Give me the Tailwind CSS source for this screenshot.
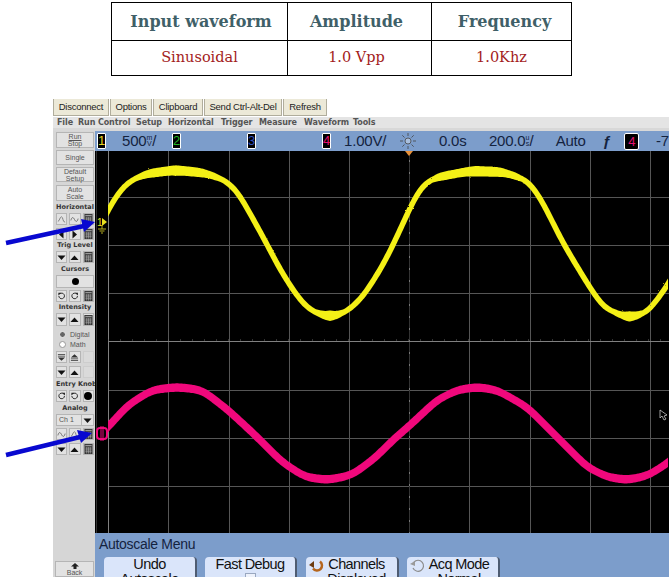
<!DOCTYPE html>
<html lang="en">
<head>
    <meta charset="UTF-8">
    <title>Oscilloscope capture</title>
    <script src="https://cdn.jsdelivr.net/npm/@tailwindcss/browser@4"></script>
</head>
<body class="bg-white w-[670px] h-[580px] overflow-hidden relative">

    <!-- icons used by the scope buttons -->
    <svg width="0" height="0" class="absolute">
        <symbol id="calc" viewBox="0 0 9 11"><rect width="9" height="11" fill="#333"/><path d="M1 1h7v1.5H1z" fill="#999"/><path d="M1 4.5h7M1 6.5h7M1 8.5h7M2.5 3.5v7M4.5 3.5v7M6.5 3.5v7" stroke="#aaa" stroke-width=".7"/></symbol>
        <symbol id="down" viewBox="0 0 9 9"><path d="M.5 2.500h8L4.500 7z" fill="#111"/></symbol>
        <symbol id="up" viewBox="0 0 9 9"><path d="M.5 7h8L4.500 2.500z" fill="#111"/></symbol>
        <symbol id="left" viewBox="0 0 9 9"><path d="M6.500 .5v8L2 4.500z" fill="#111"/></symbol>
        <symbol id="right" viewBox="0 0 9 9"><path d="M2.500 .5v8L7 4.500z" fill="#111"/></symbol>
        <symbol id="cw" viewBox="0 0 10 10"><path d="M8 5a3 3 0 1 1-1-2.300" fill="none" stroke="#222" stroke-width="1"/><path d="M5.500 1.500h3v3z" fill="#222"/></symbol>
        <symbol id="ccw" viewBox="0 0 10 10"><path d="M2 5a3 3 0 1 0 1-2.300" fill="none" stroke="#222" stroke-width="1"/><path d="M4.500 1.500h-3v3z" fill="#222"/></symbol>
        <symbol id="wave" viewBox="0 0 10 10"><path d="M1 6c1-4 2.500-4 4-1s3 3 4-1" fill="none" stroke="#666" stroke-width="1"/></symbol>
        <symbol id="step" viewBox="0 0 10 10"><path d="M1 7c2 0 2-5 4-5s1 6 4 6" fill="none" stroke="#777" stroke-width="1"/></symbol>
        <symbol id="eject" viewBox="0 0 10 10"><path d="M1 5h8L5 1.500zM1 6h8v1H1zM1 8h8v1H1z" fill="#333"/></symbol>
        <symbol id="ejectdown" viewBox="0 0 10 10"><path d="M1 1h8v1H1zM1 3h8v1H1zM1 5h8L5 8.500z" fill="#333"/></symbol>
    </svg>

    <!-- settings table -->
    <div class="pt-[2px] pl-[111px]">
        <table class="border-collapse border border-black w-[461px] h-[74px] table-fixed font-['DejaVu_Serif',serif] text-center">
            <tr class="h-[38px] text-[#3f6068] text-[16px] font-bold">
                <th class="border border-black w-[176px] pl-[3px] font-bold">Input waveform</th>
                <th class="border border-black w-[144px] pr-[6px] font-bold">Amplitude</th>
                <th class="border border-black pl-[6px] font-bold">Frequency</th>
            </tr>
            <tr class="text-[#a31c1c] text-[14.5px]">
                <td class="border border-black">Sinusoidal</td>
                <td class="border border-black pr-[6px]">1.0 Vpp</td>
                <td class="border border-black">1.0Khz</td>
            </tr>
        </table>
    </div>

    <!-- scope window -->
    <div class="mt-[23px] ml-[53px] w-[616px] h-[478px] overflow-hidden font-['Liberation_Sans',sans-serif]">
        <div class="flex h-[17px] text-[9.5px] tracking-[-0.25px] text-[#222] leading-[16px] text-center">
            <div class="w-[56px] mr-[1px] bg-[#ece9d8] border-x border-b border-[#b0ad9c]">Disconnect</div>
            <div class="w-[42px] mr-[1px] bg-[#ece9d8] border-x border-b border-[#b0ad9c]">Options</div>
            <div class="w-[50px] mr-[1px] bg-[#ece9d8] border-x border-b border-[#b0ad9c]">Clipboard</div>
            <div class="w-[78px] mr-[1px] bg-[#ece9d8] border-x border-b border-[#b0ad9c]">Send Ctrl-Alt-Del</div>
            <div class="w-[44px] bg-[#ece9d8] border-x border-b border-[#b0ad9c]">Refresh</div>
        </div>
        <div class="flex mt-[1px] h-[11px] pl-[4px] bg-[#e4e4e4] text-[8px] font-bold text-[#555] leading-[11px] font-['DejaVu_Sans',sans-serif] tracking-[-0.1px] whitespace-nowrap">
            <span class="w-[21px]">File</span><span class="w-[58px]">Run Control</span><span class="w-[32px]">Setup</span><span class="w-[53px]">Horizontal</span><span class="w-[38px]">Trigger</span><span class="w-[45px]">Measure</span><span class="w-[49px]">Waveform</span><span>Tools</span>
        </div>
        <div class="h-[3px] bg-[#d8d8d8]"></div>

        <div class="flex h-[446px]">
            <!-- left button column -->
            <div class="w-[42px] shrink-0 bg-[#d6d6d6] flex flex-col pl-[3px] pr-[1px] pt-[1px] text-[7px] text-[#555] leading-[7px] text-center">
                <div class="h-[16px] mb-[2px] bg-[#e2e2e2] border border-[#b5b5b5] flex items-center justify-center"><span><span class="underline">Run</span><br>Stop</span></div>
                <div class="h-[15px] mb-[2px] bg-[#e2e2e2] border border-[#b5b5b5] flex items-center justify-center">Single</div>
                <div class="h-[15px] mb-[3px] bg-[#e2e2e2] border border-[#b5b5b5] flex items-center justify-center"><span>Default<br>Setup</span></div>
                <div class="h-[16px] bg-[#e2e2e2] border border-[#b5b5b5] flex items-center justify-center"><span>Auto<br>Scale</span></div>

                <div class="h-[12px] leading-[12px] font-bold text-[6.5px] text-[#333] font-['DejaVu_Sans',sans-serif] whitespace-nowrap">Horizontal</div>
                <div class="grid grid-cols-3 gap-x-[2px] gap-y-[3px]">
                    <div class="h-[12px] bg-[#e2e2e2] border border-[#b5b5b5] flex items-center justify-center"><svg width="9" height="9"><use href="#step"/></svg></div>
                    <div class="h-[12px] bg-[#e2e2e2] border border-[#b5b5b5] flex items-center justify-center"><svg width="9" height="9"><use href="#wave"/></svg></div>
                    <div class="h-[12px] bg-[#e2e2e2] border border-[#b5b5b5] flex items-center justify-center"><svg width="9" height="10"><use href="#calc"/></svg></div>
                    <div class="h-[12px] bg-[#e2e2e2] border border-[#b5b5b5] flex items-center justify-center"><svg width="9" height="9"><use href="#left"/></svg></div>
                    <div class="h-[12px] bg-[#e2e2e2] border border-[#b5b5b5] flex items-center justify-center"><svg width="9" height="9"><use href="#right"/></svg></div>
                    <div class="h-[12px] bg-[#e2e2e2] border border-[#b5b5b5] flex items-center justify-center"><svg width="9" height="10"><use href="#calc"/></svg></div>
                </div>

                <div class="h-[11px] leading-[11px] font-bold text-[6.5px] text-[#333] font-['DejaVu_Sans',sans-serif] whitespace-nowrap">Trig Level</div>
                <div class="grid grid-cols-3 gap-x-[2px]">
                    <div class="h-[12px] bg-[#e2e2e2] border border-[#b5b5b5] flex items-center justify-center"><svg width="9" height="9"><use href="#down"/></svg></div>
                    <div class="h-[12px] bg-[#e2e2e2] border border-[#b5b5b5] flex items-center justify-center"><svg width="9" height="9"><use href="#up"/></svg></div>
                    <div class="h-[12px] bg-[#e2e2e2] border border-[#b5b5b5] flex items-center justify-center"><svg width="9" height="10"><use href="#calc"/></svg></div>
                </div>

                <div class="h-[12px] leading-[12px] font-bold text-[6.5px] text-[#333] font-['DejaVu_Sans',sans-serif] whitespace-nowrap">Cursors</div>
                <div class="h-[13px] mb-[2px] bg-[#e2e2e2] border border-[#b5b5b5] flex items-center justify-center"><div class="w-[7px] h-[7px] rounded-full bg-black"></div></div>
                <div class="grid grid-cols-3 gap-x-[2px]">
                    <div class="h-[12px] bg-[#e2e2e2] border border-[#b5b5b5] flex items-center justify-center"><svg width="10" height="10"><use href="#ccw"/></svg></div>
                    <div class="h-[12px] bg-[#e2e2e2] border border-[#b5b5b5] flex items-center justify-center"><svg width="10" height="10"><use href="#cw"/></svg></div>
                    <div class="h-[12px] bg-[#e2e2e2] border border-[#b5b5b5] flex items-center justify-center"><svg width="9" height="10"><use href="#calc"/></svg></div>
                </div>

                <div class="h-[11px] leading-[11px] font-bold text-[6.5px] text-[#333] font-['DejaVu_Sans',sans-serif] whitespace-nowrap">Intensity</div>
                <div class="grid grid-cols-3 gap-x-[2px]">
                    <div class="h-[13px] bg-[#e2e2e2] border border-[#b5b5b5] flex items-center justify-center"><svg width="9" height="9"><use href="#down"/></svg></div>
                    <div class="h-[13px] bg-[#e2e2e2] border border-[#b5b5b5] flex items-center justify-center"><svg width="9" height="9"><use href="#up"/></svg></div>
                    <div class="h-[13px] bg-[#e2e2e2] border border-[#b5b5b5] flex items-center justify-center"><svg width="9" height="10"><use href="#calc"/></svg></div>
                </div>

                <div class="h-[10px] mt-[3px] flex items-center gap-[4px] pl-[3px]"><div class="w-[7px] h-[7px] rounded-full bg-[#666] border border-[#eee]"></div>Digital</div>
                <div class="h-[10px] flex items-center gap-[4px] pl-[3px]"><div class="w-[7px] h-[7px] rounded-full bg-white border border-[#999]"></div>Math</div>
                <div class="grid grid-cols-3 gap-x-[2px] gap-y-[3px] mt-[2px]">
                    <div class="h-[12px] bg-[#e2e2e2] border border-[#b5b5b5] flex items-center justify-center"><svg width="9" height="9"><use href="#ejectdown"/></svg></div>
                    <div class="h-[12px] bg-[#e2e2e2] border border-[#b5b5b5] flex items-center justify-center"><svg width="9" height="9"><use href="#eject"/></svg></div>
                    <div class="h-[12px] bg-[#dadada] border border-[#cdcdcd]"></div>
                    <div class="h-[12px] bg-[#e2e2e2] border border-[#b5b5b5] flex items-center justify-center"><svg width="9" height="9"><use href="#down"/></svg></div>
                    <div class="h-[12px] bg-[#e2e2e2] border border-[#b5b5b5] flex items-center justify-center"><svg width="9" height="9"><use href="#up"/></svg></div>
                    <div class="h-[12px] bg-[#dadada] border border-[#cdcdcd]"></div>
                </div>

                <div class="h-[12px] leading-[12px] font-bold text-[6.5px] text-[#333] font-['DejaVu_Sans',sans-serif] whitespace-nowrap">Entry Knob</div>
                <div class="grid grid-cols-3 gap-x-[2px]">
                    <div class="h-[12px] bg-[#e2e2e2] border border-[#b5b5b5] flex items-center justify-center"><svg width="10" height="10"><use href="#cw"/></svg></div>
                    <div class="h-[12px] bg-[#e2e2e2] border border-[#b5b5b5] flex items-center justify-center"><svg width="10" height="10"><use href="#ccw"/></svg></div>
                    <div class="h-[12px] bg-[#e2e2e2] border border-[#b5b5b5] flex items-center justify-center"><div class="w-[8px] h-[8px] rounded-full bg-black"></div></div>
                </div>

                <div class="h-[12px] leading-[12px] font-bold text-[6.5px] text-[#333] font-['DejaVu_Sans',sans-serif] whitespace-nowrap">Analog</div>
                <div class="h-[12px] flex bg-[#e2e2e2] border border-[#b5b5b5]"><div class="flex-1 pl-[2px] text-left leading-[10px]">Ch 1</div><div class="w-[12px] border-l border-[#b5b5b5] flex items-center justify-center"><svg width="9" height="9"><use href="#down"/></svg></div></div>
                <div class="grid grid-cols-3 gap-x-[2px] gap-y-[3px] mt-[2px]">
                    <div class="h-[12px] bg-[#e2e2e2] border border-[#b5b5b5] flex items-center justify-center"><svg width="9" height="9"><use href="#wave"/></svg></div>
                    <div class="h-[12px] bg-[#e2e2e2] border border-[#b5b5b5] flex items-center justify-center"><svg width="9" height="9"><use href="#step"/></svg></div>
                    <div class="h-[12px] bg-[#e2e2e2] border border-[#b5b5b5] flex items-center justify-center"><svg width="9" height="10"><use href="#calc"/></svg></div>
                    <div class="h-[12px] bg-[#e2e2e2] border border-[#b5b5b5] flex items-center justify-center"><svg width="9" height="9"><use href="#down"/></svg></div>
                    <div class="h-[12px] bg-[#e2e2e2] border border-[#b5b5b5] flex items-center justify-center"><svg width="9" height="9"><use href="#up"/></svg></div>
                    <div class="h-[12px] bg-[#e2e2e2] border border-[#b5b5b5] flex items-center justify-center"><svg width="9" height="10"><use href="#calc"/></svg></div>
                </div>

                <div class="mt-auto -ml-[1px] h-[16px] bg-[#e2e2e2] border border-[#b5b5b5] flex flex-col items-center justify-end leading-[7px]">
                    <svg width="8" height="6" viewBox="0 0 8 6"><path d="M4 0l4 3.500H5.500V6h-3V3.500H0z" fill="#222"/></svg>
                    <span>Back</span>
                </div>
            </div>

            <!-- right: status bar, plot, softkeys -->
            <div class="flex-1 flex flex-col min-w-0">
                <div class="h-[20px] shrink-0 bg-[#7c9dcb] flex items-center text-[15px] tracking-[-0.2px] text-[#14233f] leading-[20px] whitespace-nowrap">
                    <div class="ml-[2px] w-[9px] h-[16px] bg-black border border-white rounded-[1px] text-[#e8d820] text-[13px] leading-[14px] text-center">1</div>
                    <div class="ml-[16px] w-[51px] flex items-center">500<span class="inline-flex flex-col text-[7px] leading-[6px] tracking-normal text-center"><span>m</span><span>V</span></span>/</div>
                    <div class="w-[9px] h-[16px] bg-black border border-white rounded-[1px] text-[#22b422] text-[13px] leading-[14px] text-center">2</div>
                    <div class="ml-[66px] w-[9px] h-[16px] bg-black border border-white rounded-[1px] text-[#3050c0] text-[13px] leading-[14px] text-center">3</div>
                    <div class="ml-[66px] w-[9px] h-[16px] bg-black border border-white rounded-[1px] text-[#e01070] text-[13px] leading-[14px] text-center">4</div>
                    <div class="ml-[13px] w-[57px]">1.00V/</div>
                    <svg width="16" height="16" viewBox="0 0 16 16" class="shrink-0"><circle cx="8" cy="8" r="3" fill="#a9bfdd" stroke="#444" stroke-width=".8"/><path d="M8 0v3M8 13v3M0 8h3M13 8h3M2.300 2.300l2.200 2.200M11.500 11.500l2.200 2.200M13.700 2.300l-2.200 2.200M4.500 11.500l-2.200 2.200" stroke="#444" stroke-width=".8"/></svg>
                    <div class="ml-[23px] w-[51px]">0.0s</div>
                    <div class="w-[68px] flex items-center">200.0<span class="inline-flex flex-col text-[7px] leading-[6px] tracking-normal text-center"><span>u</span><span>s</span></span>/</div>
                    <div class="w-[48px]">Auto</div>
                    <div class="w-[22px] font-bold">ƒ</div>
                    <div class="w-[15px] h-[17px] bg-black border border-white rounded-[2px] text-[#e01070] text-[13px] leading-[15px] text-center">4</div>
                    <div class="ml-[17px]">-7</div>
                </div>
                <div class="h-[382px] shrink-0 bg-black relative">
                    <svg width="574" height="382" viewBox="95 151 574 382" class="block">
                        <defs>
                            <filter id="fuzz" x="-2%" y="-5%" width="104%" height="110%">
                                <feTurbulence type="fractalNoise" baseFrequency="1.400" numOctaves="1" seed="3"/>
                                <feDisplacementMap in="SourceGraphic" scale="2"/>
                            </filter>
                        </defs>
                        <g stroke="#565656" stroke-width="1">
                            <path d="M168.500 151V533M229.500 151V533M289.500 151V533M349.500 151V533M469.500 151V533M530.500 151V533M590.500 151V533M650.500 151V533"/>
                            <path d="M108 197.500H669M108 245.500H669M108 293.500H669M108 390.500H669M108 438.500H669M108 486.500H669"/>
                        </g>
                        <path d="M96.500 151V533" stroke="#333"/>
                        <path d="M108.500 151V533" stroke="#808080"/>
                        <path d="M409.500 151V533" stroke="#333"/>
                        <path d="M409.500 160V533" stroke="#777" stroke-dasharray="2 10"/>
                        <path d="M108 341.500H669" stroke="#808080"/>
                        <path d="M108 340H669" stroke="#666" stroke-dasharray="1 11"/>
                        <path id="yellowTrace" fill="#f4f018" filter="url(#fuzz)"/>
                        <path id="pinkTrace" fill="#f0087c"/>
                        <path d="M405 151h8l-4 5z" fill="#e8913a"/>
                        <text x="97" y="226" fill="#e8e020" font-size="10" font-family="Liberation Sans">1</text>
                        <path d="M102 218l5 4-5 4z" fill="#e8e020"/>
                        <path d="M102 226v3M98 229h8M99.500 231h5M101 233h2" stroke="#b8b020" fill="none"/>
                        <rect x="97" y="428" width="10" height="11" rx="3" fill="none" stroke="#f0087c" stroke-width="2"/>
                        <path d="M101 426v15M103 426v15" stroke="#f0087c"/>
                        <path d="M660 410l0 8 2-2 2 4 2-1-2-3 3-1z" fill="#000" stroke="#ddd" stroke-width="0.700"/>
                    </svg>
                </div>
                <div class="flex-1 bg-[#7c9dcb] overflow-hidden">
                    <div class="pl-[4px] text-[14px] tracking-[-0.3px] leading-[21px] text-[#14233f] pt-[1px]">Autoscale Menu</div>
                    <div class="flex pl-[9px] pt-[2px] text-[14.5px] tracking-[-0.6px] leading-[15px] text-[#111] text-center whitespace-nowrap">
                        <div class="w-[93px] h-[30px] bg-[#dae5fa] rounded-t-[4px] border-r-2 border-[#4e5c72]">Undo<br>Autoscale</div>
                        <div class="ml-[8px] w-[92px] h-[30px] bg-[#dae5fa] rounded-t-[4px] border-r-2 border-[#4e5c72] flex flex-col items-center">Fast Debug<div class="w-[11px] h-[6px] mt-[1px] bg-[#eef2fb] border border-[#9aa8c0]"></div></div>
                        <div class="ml-[9px] w-[93px] h-[30px] bg-[#dae5fa] rounded-t-[4px] border-r-2 border-[#4e5c72] flex">
                            <svg width="16" height="15" viewBox="0 0 16 15" class="ml-[2px] mt-[1px] shrink-0"><path d="M12 3.500a5 5 0 1 1-7 7" fill="none" stroke="#b5651d" stroke-width="2.500"/><path d="M1 7l5-4v7z" fill="#6b3a10"/></svg>
                            <div class="flex-1 pr-[8px]">Channels<br>Displayed</div>
                        </div>
                        <div class="ml-[8px] w-[93px] h-[30px] bg-[#dae5fa] rounded-t-[4px] border-r-2 border-[#4e5c72] flex">
                            <svg width="16" height="15" viewBox="0 0 16 15" class="ml-[3px] mt-[1px] shrink-0"><path d="M4 4a5.500 5.500 0 1 1-1 6" fill="none" stroke="#8c8c8c" stroke-width="1.200"/><path d="M0 6l5-3v5z" fill="#9a9a9a"/></svg>
                            <div class="flex-1 pr-[6px]">Acq Mode<br>Normal</div>
                        </div>
                    </div>
                </div>
            </div>
        </div>
    </div>

    <!-- blue arrows over the capture -->
    <svg width="670" height="580" class="absolute left-0 top-0 pointer-events-none">
        <path d="M6 243L84 226" stroke="#0808d0" stroke-width="4.500"/>
        <path d="M95 222L81 219L84 232z" fill="#0808d0"/>
        <path d="M6 455L80 437" stroke="#0808d0" stroke-width="4.500"/>
        <path d="M92 433L77 430L81 443z" fill="#0808d0"/>
    </svg>

    <script>
        // traces read off the capture as x,y points, smoothed, then drawn as a band.
        // the first and last points lie outside the plot so the smoothing has no end effects
        const yellow = [[80,265],[95,235],[108,211],[115,197],[128,182],[145,174],[175,170],[205,173],[225,180],[238,192],[262,235],[282,273],[302,303],[315,313],[330,317],[345,313],[362,298],[382,267],[395,241],[409,210],[420,188],[433,178],[470,171],[503,172],[527,180],[540,197],[563,243],[587,283],[603,307],[627,318],[647,313],[668,285],[680,262],[700,225]];
        const pink = [[80,455],[95,440],[108,427],[128,405],[152,390],[177,387],[202,390],[228,410],[255,435],[282,462],[305,477],[328,480],[352,475],[375,458],[395,438],[407,428],[437,400],[457,390],[477,387],[497,390],[527,407],[557,437],[587,467],[607,477],[627,480],[647,476],[668,463],[680,452],[700,430]];

        function soften(ys, r) {
            return ys.map((_, i) => {
                let sum = 0, n = 0;
                for (let k = Math.max(0, i - r); k <= Math.min(ys.length - 1, i + r); k++) { sum += ys[k]; n++; }
                return sum / n;
            });
        }

        function band(points, base, extra) {
            const xs = [], ys = [];
            let seg = 0;
            for (let x = points[0][0]; x <= 700; x++) {
                while (points[seg + 1][0] < x) seg++;
                const a = points[seg], b = points[seg + 1];
                xs.push(x);
                ys.push(a[1] + (b[1] - a[1]) * (x - a[0]) / (b[0] - a[0]));
            }
            const smooth = soften(soften(soften(ys, 6), 6), 4);
            const top = [], bottom = [];
            smooth.forEach((y, i) => {
                if (xs[i] < 108 || xs[i] > 668) return;
                const s = (smooth[i + 1] - smooth[i - 1]) / 2;
                const h = base * Math.sqrt(1 + s * s) + extra * (1 - Math.min(Math.abs(s) / 0.5, 1));
                top.push(xs[i] + ' ' + (y - h / 2).toFixed(1));
                bottom.unshift(xs[i] + ' ' + (y + h / 2).toFixed(1));
            });
            return 'M' + top.concat(bottom).join('L') + 'Z';
        }
        document.getElementById('yellowTrace').setAttribute('d', band(yellow, 5.5, 5));
        document.getElementById('pinkTrace').setAttribute('d', band(pink, 7.5, 1));
    </script>
</body>
</html>
